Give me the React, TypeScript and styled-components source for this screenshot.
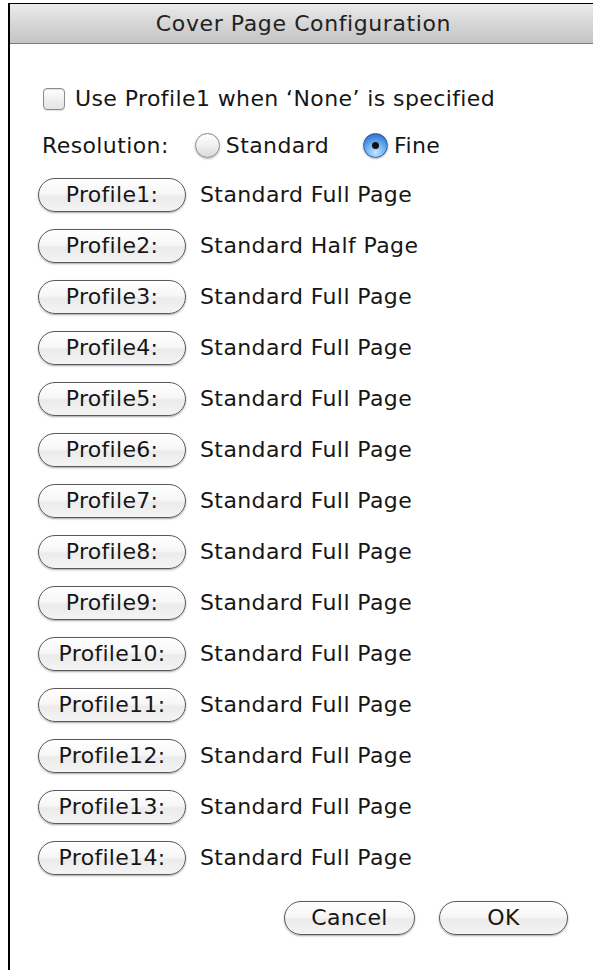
import React from "react";
import styled, { createGlobalStyle } from "styled-components";

const GlobalStyle = createGlobalStyle`
  html, body {
    margin: 0;
    padding: 0;
    background: #ffffff;
  }
  body {
    font-family: "DejaVu Sans", "Liberation Sans", sans-serif;
    color: #161616;
  }
`;

const profiles = [
  { name: "Profile1:", value: "Standard Full Page" },
  { name: "Profile2:", value: "Standard Half Page" },
  { name: "Profile3:", value: "Standard Full Page" },
  { name: "Profile4:", value: "Standard Full Page" },
  { name: "Profile5:", value: "Standard Full Page" },
  { name: "Profile6:", value: "Standard Full Page" },
  { name: "Profile7:", value: "Standard Full Page" },
  { name: "Profile8:", value: "Standard Full Page" },
  { name: "Profile9:", value: "Standard Full Page" },
  { name: "Profile10:", value: "Standard Full Page" },
  { name: "Profile11:", value: "Standard Full Page" },
  { name: "Profile12:", value: "Standard Full Page" },
  { name: "Profile13:", value: "Standard Full Page" },
  { name: "Profile14:", value: "Standard Full Page" },
];

const App = () => {
  return (
    <>
      <GlobalStyle />
      <Window>
        <TitleBar>Cover Page Configuration</TitleBar>
        <Body>
          <CheckRow>
            <CheckBox />
            <Label>Use Profile1 when ‘None’ is specified</Label>
          </CheckRow>
          <ResolutionRow>
            <Label>Resolution:</Label>
            <RadioGroup>
              <RadioOption>
                <Radio />
                <Label>Standard</Label>
              </RadioOption>
              <RadioOption>
                <Radio $checked>
                  <Dot />
                </Radio>
                <Label>Fine</Label>
              </RadioOption>
            </RadioGroup>
          </ResolutionRow>
          {profiles.map((p) => (
            <ProfileRow key={p.name}>
              <PillButton $width={148}>{p.name}</PillButton>
              <Label>{p.value}</Label>
            </ProfileRow>
          ))}
          <Footer>
            <PillButton $width={131}>Cancel</PillButton>
            <PillButton $width={129}>OK</PillButton>
          </Footer>
        </Body>
      </Window>
    </>
  );
};

export default App;

const Window = styled.div`
  margin: 3px 0 0 8px;
  min-height: 967px;
  border-left: 2px solid #000;
  border-top: 1px solid #000;
  box-sizing: border-box;
`;

const TitleBar = styled.div`
  height: 39px;
  display: flex;
  align-items: center;
  justify-content: center;
  background: linear-gradient(#ebebeb, #d6d6d6 50%, #c4c4c4);
  border-bottom: 1px solid #7d7d7d;
  font-size: 22px;
  letter-spacing: 0.6px;
  color: #222;
  padding-left: 4px;
`;

const Body = styled.div`
  display: flex;
  flex-direction: column;
  padding: 32px 0 0 28px;
`;

const Label = styled.span`
  font-size: 22px;
  letter-spacing: 0.4px;
  color: #161616;
  white-space: nowrap;
`;

const CheckRow = styled.div`
  height: 45px;
  display: flex;
  align-items: center;
  gap: 10px;
  padding-left: 5px;
`;

const CheckBox = styled.span`
  width: 22px;
  height: 22px;
  box-sizing: border-box;
  border: 1px solid #8c8c8c;
  border-radius: 4px;
  background: linear-gradient(#ffffff, #f1f1f1 50%, #e4e4e4);
  box-shadow: inset 0 1px 1px rgba(0, 0, 0, 0.12), 0 1px 1px rgba(0, 0, 0, 0.12);
`;

const ResolutionRow = styled.div`
  height: 48px;
  display: flex;
  align-items: center;
  gap: 26px;
  padding-left: 4px;
`;

const RadioGroup = styled.div`
  display: flex;
  align-items: center;
  gap: 34px;
`;

const RadioOption = styled.div`
  display: flex;
  align-items: center;
  gap: 6px;
`;

const Radio = styled.span<{ $checked?: boolean }>`
  width: 25px;
  height: 25px;
  box-sizing: border-box;
  border-radius: 50%;
  display: flex;
  align-items: center;
  justify-content: center;
  border: 1px solid ${(p) => (p.$checked ? "#2a5aa0" : "#8a8a8a")};
  background: ${(p) =>
    p.$checked
      ? "radial-gradient(circle at 50% 80%, #c6e6ff 0%, #74b4f2 40%, #2e70cc 85%, #2a63b8 100%)"
      : "linear-gradient(#ffffff, #f0f0f0 50%, #dadada)"};
  box-shadow: 0 1px 2px rgba(0, 0, 0, 0.28);
`;

const Dot = styled.span`
  width: 7px;
  height: 7px;
  border-radius: 50%;
  background: #111;
`;

const ProfileRow = styled.div`
  height: 51px;
  display: flex;
  align-items: center;
  gap: 14px;
`;

const PillButton = styled.button<{ $width: number }>`
  width: ${(p) => p.$width}px;
  height: 34px;
  box-sizing: border-box;
  padding: 0;
  border: 1px solid #5a5a5a;
  border-radius: 17px;
  background: linear-gradient(#ffffff, #f7f7f7 45%, #ebebeb 55%, #f4f4f4);
  box-shadow: 0 1px 2px rgba(0, 0, 0, 0.35);
  font-family: "DejaVu Sans", "Liberation Sans", sans-serif;
  font-size: 22px;
  letter-spacing: 0.3px;
  color: #161616;
  text-align: center;
`;

const Footer = styled.div`
  height: 69px;
  display: flex;
  align-items: center;
  justify-content: flex-end;
  gap: 24px;
  padding-right: 25px;
`;
